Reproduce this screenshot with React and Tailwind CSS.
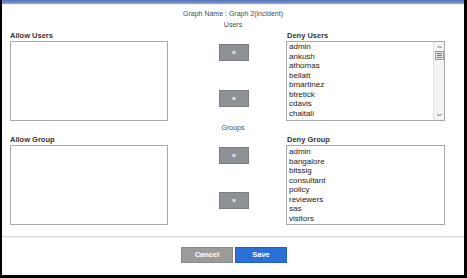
import React from "react";

const denyUsers = ["admin", "ankush", "athomas", "bellatt", "bmartinez", "btretick", "cdavis", "chaitali"];
const denyGroups = ["admin", "bangalore", "bitssig", "consultant", "policy", "reviewers", "sas", "visitors"];

const MoveButton = ({ label }) => (
  <div className="w-[30px] h-[17px] bg-[#8e9196] border border-[#7c7f84] flex items-center justify-center text-white text-[7px] font-bold leading-none">
    {label}
  </div>
);

const ListBox = ({ items, scroll, top }) => (
  <div className="h-[80px] border border-[#a9a9a9] bg-white flex">
    <div className={`flex-1 pl-[2px] ${top} text-[8px] leading-[9.5px] text-[#1a1a1a]`}>
      {items.map((item) => (
        <div key={item}>{item}</div>
      ))}
    </div>
    {scroll && (
      <div className="w-[11px] border-l border-[#e2e2e2] bg-[#f4f4f4] flex flex-col items-center">
        <svg width="5" height="8" viewBox="0 0 5 8" className="mt-[1px]">
          <path d="M0.5 5 L2.5 3 L4.5 5" fill="none" stroke="#666" strokeWidth="1" />
        </svg>
        <div className="w-[9px] h-[9px] border border-[#9a9a9a] bg-[#e8e8e8] flex flex-col items-center justify-center gap-[1px]">
          <div className="w-[5px] h-px bg-[#777]" />
          <div className="w-[5px] h-px bg-[#777]" />
          <div className="w-[5px] h-px bg-[#777]" />
        </div>
        <div className="flex-1" />
        <svg width="5" height="8" viewBox="0 0 5 8" className="mb-[1px]">
          <path d="M0.5 3 L2.5 5 L4.5 3" fill="none" stroke="#666" strokeWidth="1" />
        </svg>
      </div>
    )}
  </div>
);

const Section = ({ left, right, items, scroll, top, buttonTop, buttonGap }) => (
  <div className="flex pl-[8px]">
    <div className="w-[158px]">
      <div className="h-[11px] text-[7.5px] leading-[11px] font-bold text-[#333]">{left}</div>
      <div className="h-[80px] border border-[#a9a9a9] bg-white" />
    </div>
    <div className={`w-[118px] pl-[51px] flex flex-col ${buttonTop} ${buttonGap}`}>
      <MoveButton label="«" />
      <MoveButton label="»" />
    </div>
    <div className="w-[159px]">
      <div className="h-[11px] text-[7.5px] leading-[11px] font-bold text-[#333] pl-[1px]">{right}</div>
      <ListBox items={items} scroll={scroll} top={top} />
    </div>
  </div>
);

export default function App() {
  return (
    <div
      className="w-[467px] h-[278px] bg-black flex flex-col pl-[2px] pr-[3px] pb-[3px]"
      style={{ fontFamily: '"Liberation Sans", Arial, sans-serif' }}
    >
      <div className="flex-1 bg-white flex flex-col">
        <div className="h-[4px] bg-gradient-to-b from-[#4e6eb2] to-[#8ea8da]" />
        <div className="h-[1px] bg-[#fbeef0]" />
        <div className="mt-[4px] h-[10px] text-center text-[7px] leading-[10px] text-[#4a4a4a]">
          Graph Name : Graph 2(incident)
        </div>
        <div className="mt-[1px] h-[10px] text-center text-[7px] leading-[10px] text-[#4a4a4a]">Users</div>
        <Section
          left="Allow Users"
          right="Deny Users"
          items={denyUsers}
          scroll
          top="pt-0"
          buttonTop="pt-[14px]"
          buttonGap="gap-[29px]"
        />
        <div className="mt-[2px] h-[10px] text-center text-[7px] leading-[10px] text-[#4a4a4a]">Groups</div>
        <div className="mt-[1px]">
          <Section
            left="Allow Group"
            right="Deny Group"
            items={denyGroups}
            top="pt-[1px]"
            buttonTop="pt-[13px]"
            buttonGap="gap-[28px]"
          />
        </div>
        <div className="mt-[11px] h-[2px] bg-[#dcdcdc] border-b border-[#f2f2f2]" />
        <div className="mt-[9px] flex justify-center gap-[2px] pl-[2px]">
          <div className="w-[52px] h-[16px] bg-[#9b9b9b] border border-[#8a8a8a] flex items-center justify-center text-white text-[7.5px] font-bold">
            Cancel
          </div>
          <div className="w-[52px] h-[16px] bg-[#2c6fd7] border border-[#2260c0] flex items-center justify-center text-white text-[7.5px] font-bold">
            Save
          </div>
        </div>
      </div>
    </div>
  );
}
